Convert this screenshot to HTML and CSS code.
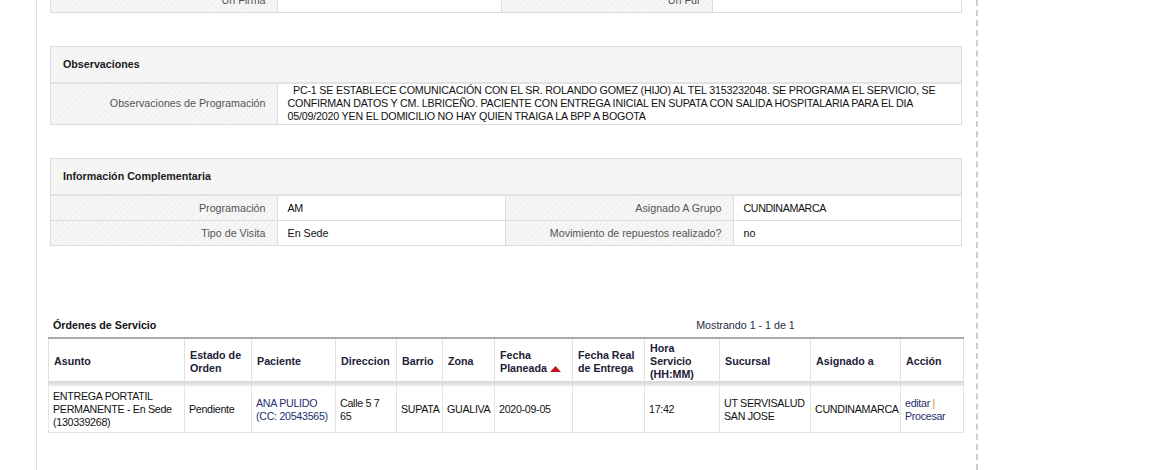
FILE: index.html
```html
<!DOCTYPE html>
<html lang="es">
<head>
  <meta charset="UTF-8">
  <title>Detalle de Servicio</title>
  <link rel="stylesheet" href="styles.css">
</head>
<body>
  <div class="page">

    <!-- Datos generales (fila final) -->
    <div class="panel panel-top">
      <table class="detail">
        <tr>
          <td class="label w-226">Un Firma</td>
          <td class="value w-224"></td>
          <td class="label w-211">Un Fur</td>
          <td class="value w-249"></td>
        </tr>
      </table>
    </div>

    <!-- Observaciones -->
    <div class="panel">
      <div class="panel-header">Observaciones</div>
      <table class="detail">
        <tr>
          <td class="label w-226 obs-label">Observaciones de Programación</td>
          <td class="value obs-value">&nbsp; PC-1 SE ESTABLECE COMUNICACIÓN CON EL SR. ROLANDO GOMEZ (HIJO) AL TEL 3153232048. SE PROGRAMA EL SERVICIO, SE CONFIRMAN DATOS Y CM. LBRICEÑO. PACIENTE CON ENTREGA INICIAL EN SUPATA CON SALIDA HOSPITALARIA PARA EL DIA 05/09/2020 YEN EL DOMICILIO NO HAY QUIEN TRAIGA LA BPP A BOGOTA</td>
        </tr>
      </table>
    </div>

    <!-- Informacion complementaria -->
    <div class="panel">
      <div class="panel-header">Información Complementaria</div>
      <table class="detail">
        <tr>
          <td class="label w-226">Programación</td>
          <td class="value w-228 caps">AM</td>
          <td class="label w-228">Asignado A Grupo</td>
          <td class="value w-228 caps">CUNDINAMARCA</td>
        </tr>
        <tr>
          <td class="label">Tipo de Visita</td>
          <td class="value">En Sede</td>
          <td class="label">Movimiento de repuestos realizado?</td>
          <td class="value">no</td>
        </tr>
      </table>
    </div>

    <!-- Ordenes de servicio -->
    <div class="orders">
      <div class="orders-bar">
        <div class="orders-title">Órdenes de Servicio</div>
        <div class="orders-paging">Mostrando 1 - 1 de 1</div>
      </div>
      <table class="orders-table">
        <thead>
          <tr>
            <th class="c-asunto">Asunto</th>
            <th class="c-estado">Estado de Orden</th>
            <th class="c-paciente">Paciente</th>
            <th class="c-direccion">Direccion</th>
            <th class="c-barrio">Barrio</th>
            <th class="c-zona">Zona</th>
            <th class="c-fecha">Fecha Planeada <svg class="sort-up" width="11" height="6" viewBox="0 0 11 6"><polygon points="0,6 5.5,0 11,6" fill="#c8141e"/></svg></th>
            <th class="c-real">Fecha Real de Entrega</th>
            <th class="c-hora">Hora Servicio (HH:MM)</th>
            <th class="c-sucursal">Sucursal</th>
            <th class="c-asignado">Asignado a</th>
            <th class="c-accion">Acción</th>
          </tr>
        </thead>
        <tbody>
          <tr>
            <td>ENTREGA PORTATIL PERMANENTE - En Sede (130339268)</td>
            <td>Pendiente</td>
            <td><a href="#" class="link">ANA PULIDO (CC: 20543565)</a></td>
            <td>Calle 5 7 65</td>
            <td>SUPATA</td>
            <td>GUALIVA</td>
            <td>2020-09-05</td>
            <td></td>
            <td>17:42</td>
            <td>UT SERVISALUD SAN JOSE</td>
            <td>CUNDINAMARCA</td>
            <td><a href="#" class="link">editar</a> <span class="sep">|</span> <a href="#" class="link">Procesar</a></td>
          </tr>
        </tbody>
      </table>
    </div>

  </div>
</body>
</html>
```

FILE: styles.css
```css
/* Base */
* {
  margin: 0;
  padding: 0;
  box-sizing: border-box;
}

body {
  font-family: "Liberation Sans", Arial, sans-serif;
  font-size: 10.7px;
  line-height: 13px;
  color: #111;
  background: #fff;
}

a {
  text-decoration: none;
}

/* Main column with side rules */
.page {
  display: flow-root;
  width: 942px;
  min-height: 100vh;
  margin-left: 36px;
  padding: 0 14px 0 13px;
  border-left: 1px solid #dcdcdc;
  border-right: 2px dashed #cdcdcd;
}

/* Panels */
.panel {
  border: 1px solid #dcdcdc;
  margin-top: 33px;
}

.panel-top {
  margin-top: -13px;
}

.panel-header {
  height: 37px;
  padding: 0 12px;
  line-height: 35px;
  font-weight: bold;
  color: #1a1a1a;
  background: #f5f5f5;
  border-bottom: 2px solid #e2e2e2;
}

/* Detail tables */
.detail {
  width: 100%;
  table-layout: fixed;
  border-collapse: collapse;
}

.detail td {
  padding: 6px 10px 5px;
  vertical-align: middle;
}

.detail td + td {
  border-left: 1px solid #dcdcdc;
}

.detail tr + tr td {
  border-top: 1px solid #dcdcdc;
}

.detail .label {
  text-align: right;
  color: #555;
  padding-right: 11px;
  background-color: #f2f2f2;
  background-image: repeating-linear-gradient(135deg, #f1f1f1 0 2px, #f7f7f7 2px 4px);
}

.detail .value {
  color: #111;
  background: #fff;
}

.detail .caps {
  letter-spacing: -0.4px;
}

.detail .obs-label,
.detail .obs-value {
  padding-top: 0;
  padding-bottom: 1px;
}

.detail .obs-value {
  letter-spacing: -0.2px;
}

.w-211 { width: 211px; }
.w-224 { width: 224px; }
.w-226 { width: 226px; }
.w-228 { width: 228px; }
.w-249 { width: 249px; }

/* Orders */
.orders {
  margin-top: 73px;
}

.orders-bar {
  display: flex;
  height: 13px;
  margin-bottom: 5px;
}

.orders-title {
  width: 645px;
  padding-left: 3px;
  font-weight: bold;
  color: #111;
}

.orders-paging {
  width: 101px;
  text-align: center;
  white-space: nowrap;
  color: #262b48;
}

.orders-table {
  width: 915px;
  margin-left: -2px;
  table-layout: fixed;
  border-collapse: collapse;
  border-top: 2px solid #a9a9a9;
}

.orders-table th {
  padding: 3px 4px 5px 5px;
  text-align: left;
  vertical-align: middle;
  font-weight: bold;
  color: #1d2036;
  background: #fff linear-gradient(#d6d6d6, #ededed) bottom / 100% 5px no-repeat;
  border-left: 1px solid #e0e0e0;
  border-right: 1px solid #e0e0e0;
}

.orders-table td {
  padding: 4px 4px 3px;
  vertical-align: middle;
  color: #111;
  letter-spacing: -0.3px;
  border: 1px solid #e4e4e4;
  border-top: none;
}

.sort-up {
  vertical-align: 0;
}

.c-asunto { width: 136px; }
.c-estado { width: 67px; }
.c-paciente { width: 84px; }
.c-direccion { width: 61px; }
.c-barrio { width: 46px; }
.c-zona { width: 52px; }
.c-fecha { width: 78px; }
.c-real { width: 72px; }
.c-hora { width: 75px; }
.c-sucursal { width: 91px; }
.c-asignado { width: 90px; }
.c-accion { width: 63px; }

.link {
  color: #24306e;
}

.sep {
  color: #e38b1c;
}
```
